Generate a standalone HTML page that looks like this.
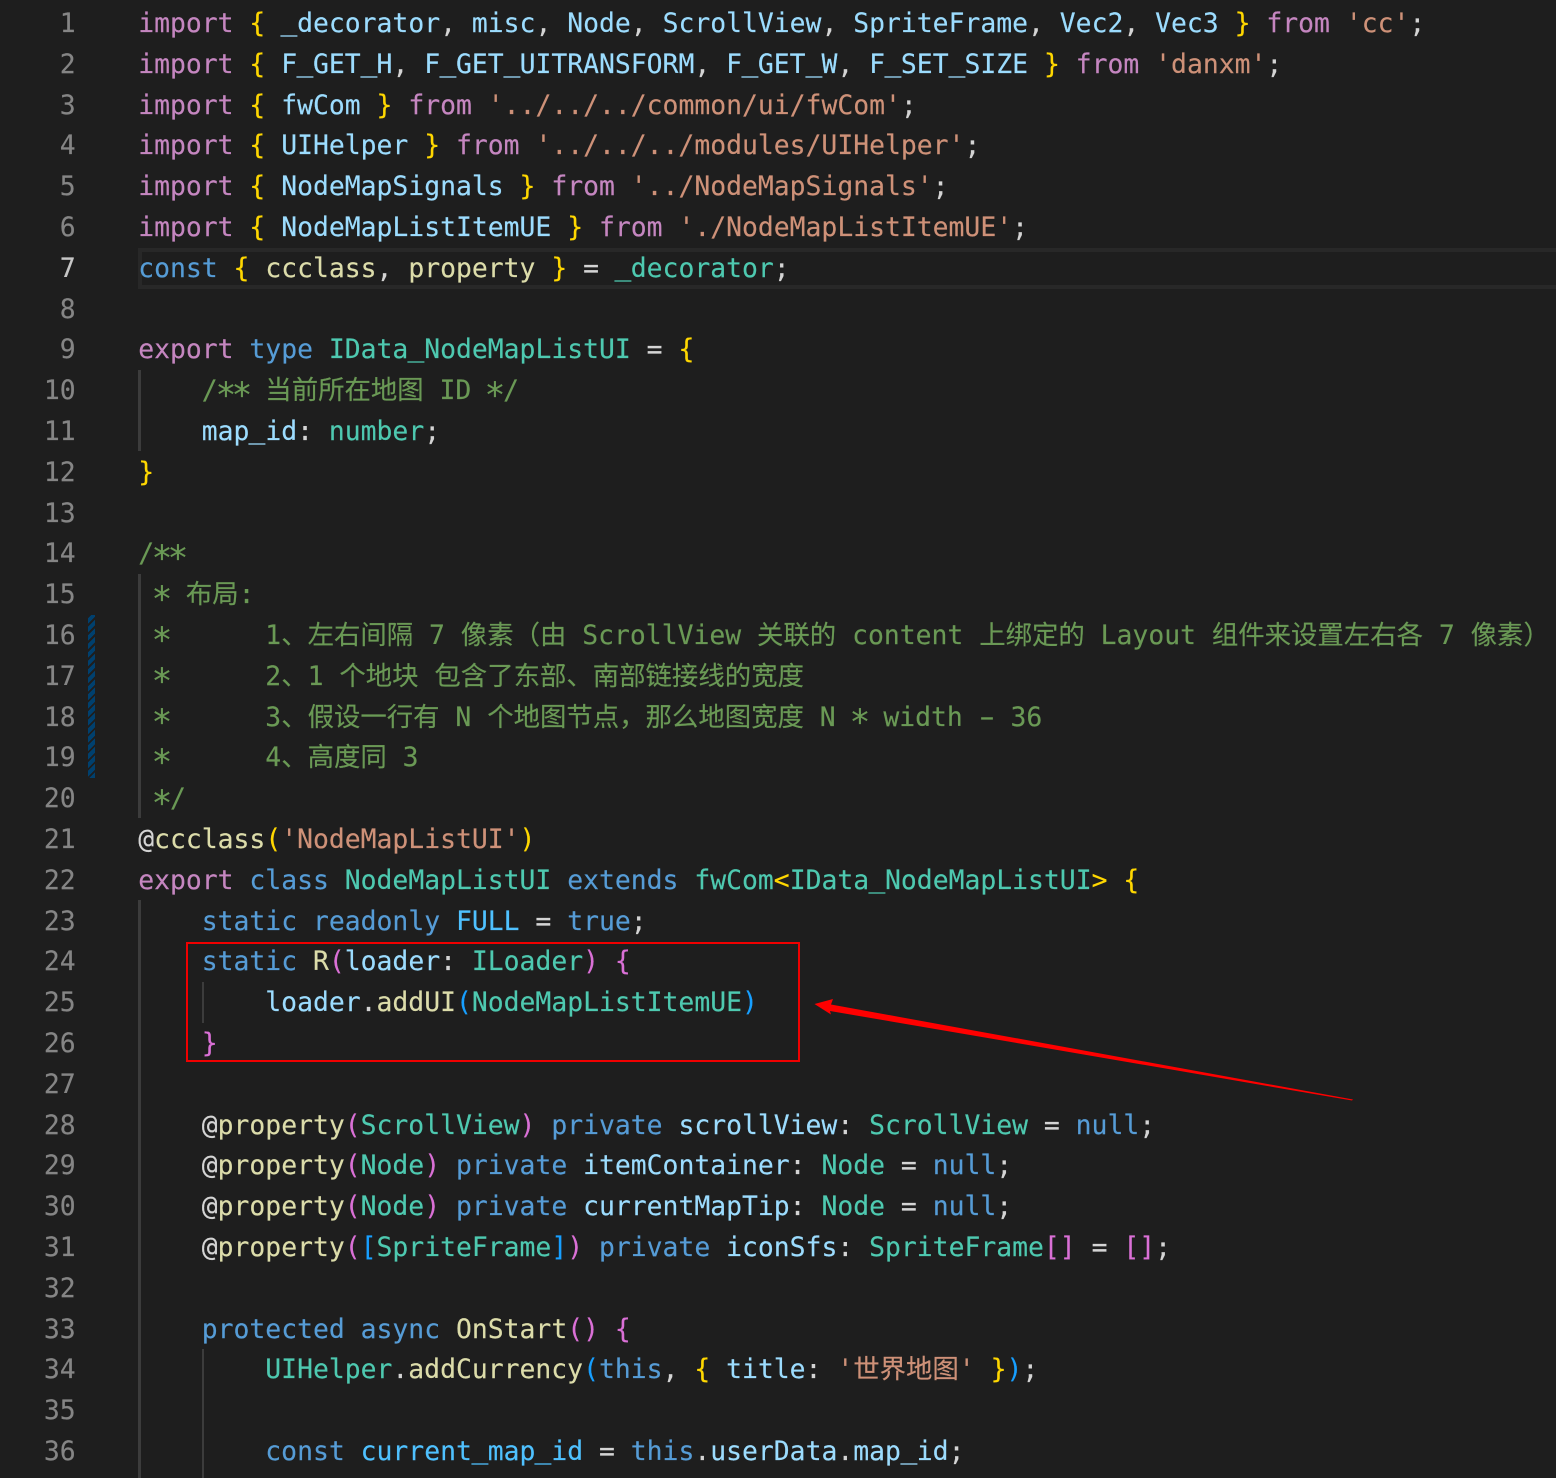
<!DOCTYPE html>
<html lang="en">
<head>
<meta charset="utf-8">
<title>NodeMapListUI.ts</title>
<style>
html,body{margin:0;padding:0;background:#1e1e1e;}
body{width:1556px;height:1478px;overflow:hidden;position:relative;font-family:"DejaVu Sans Mono","Noto Sans CJK SC",monospace;font-size:26.4px;color:#d4d4d4;-webkit-text-stroke:0.15px currentColor;}
.abs{position:absolute;}
#nums{position:absolute;left:0;top:4px;width:75.7px;text-align:right;color:#858585;}
#nums div,#code div{height:40.8px;line-height:40.8px;white-space:pre;}
#nums .on{color:#c6c6c6;}
#code{position:absolute;left:138.2px;top:4px;width:1418px;}
.k{color:#c586c0}.v{color:#9cdcfe}.y{color:#ffd700}.s{color:#ce9178}.b{color:#569cd6}.f{color:#dcdcaa}.t{color:#4ec9b0}.c{color:#6a9955}.p{color:#da70d6}.l{color:#179fff}.o{color:#4fc1ff}
.g{position:absolute;background:#3c3c3c;width:3px;}
.a{display:inline-block;transform:translateY(5.5px) scale(1.3);}
.d{display:inline-block;transform:scaleX(1.7);}
.u{display:inline-block;transform:translateY(-2px) scaleX(1.06);}
</style>
</head>
<body>
<div class="abs" style="left:138px;top:248px;width:1418px;height:41px;box-sizing:border-box;border:4px solid #282828;border-right:0;"></div>
<div class="g" style="left:138px;top:370px;height:81px;"></div>
<div class="g" style="left:138px;top:574px;height:244px;"></div>
<div class="g" style="left:138px;top:900px;height:578px;"></div>
<div class="g" style="left:202px;top:982px;height:41px;width:2px;"></div>
<div class="g" style="left:202px;top:1349px;height:129px;width:2px;"></div>
<div class="abs" style="left:88px;top:615px;width:7px;height:163px;background:repeating-linear-gradient(-45deg,#00406e 0,#00406e 4px,#1e1e1e 4px,#1e1e1e 6px);"></div>
<div id="nums">
<div>1</div><div>2</div><div>3</div><div>4</div><div>5</div><div>6</div><div class="on">7</div><div>8</div><div>9</div><div>10</div><div>11</div><div>12</div><div>13</div><div>14</div><div>15</div><div>16</div><div>17</div><div>18</div><div>19</div><div>20</div><div>21</div><div>22</div><div>23</div><div>24</div><div>25</div><div>26</div><div>27</div><div>28</div><div>29</div><div>30</div><div>31</div><div>32</div><div>33</div><div>34</div><div>35</div><div>36</div>
</div>
<div id="code">
<div><span class="k">import</span> <span class="y">{</span> <span class="v"><span class="u">_</span>decorator</span>, <span class="v">misc</span>, <span class="v">Node</span>, <span class="v">ScrollView</span>, <span class="v">SpriteFrame</span>, <span class="v">Vec2</span>, <span class="v">Vec3</span> <span class="y">}</span> <span class="k">from</span> <span class="s">'cc'</span>;</div>
<div><span class="k">import</span> <span class="y">{</span> <span class="v">F<span class="u">_</span>GET<span class="u">_</span>H</span>, <span class="v">F<span class="u">_</span>GET<span class="u">_</span>UITRANSFORM</span>, <span class="v">F<span class="u">_</span>GET<span class="u">_</span>W</span>, <span class="v">F<span class="u">_</span>SET<span class="u">_</span>SIZE</span> <span class="y">}</span> <span class="k">from</span> <span class="s">'danxm'</span>;</div>
<div><span class="k">import</span> <span class="y">{</span> <span class="v">fwCom</span> <span class="y">}</span> <span class="k">from</span> <span class="s">'../../../common/ui/fwCom'</span>;</div>
<div><span class="k">import</span> <span class="y">{</span> <span class="v">UIHelper</span> <span class="y">}</span> <span class="k">from</span> <span class="s">'../../../modules/UIHelper'</span>;</div>
<div><span class="k">import</span> <span class="y">{</span> <span class="v">NodeMapSignals</span> <span class="y">}</span> <span class="k">from</span> <span class="s">'../NodeMapSignals'</span>;</div>
<div><span class="k">import</span> <span class="y">{</span> <span class="v">NodeMapListItemUE</span> <span class="y">}</span> <span class="k">from</span> <span class="s">'./NodeMapListItemUE'</span>;</div>
<div><span class="b">const</span> <span class="y">{</span> <span class="f">ccclass</span>, <span class="f">property</span> <span class="y">}</span> = <span class="t"><span class="u">_</span>decorator</span>;</div>
<div> </div>
<div><span class="k">export</span> <span class="b">type</span> <span class="t">IData<span class="u">_</span>NodeMapListUI</span> = <span class="y">{</span></div>
<div><span class="c">    /<span class="a">*</span><span class="a">*</span> 当前所在地图 ID <span class="a">*</span>/</span></div>
<div>    <span class="v">map<span class="u">_</span>id</span>: <span class="t">number</span>;</div>
<div><span class="y">}</span></div>
<div> </div>
<div><span class="c">/<span class="a">*</span><span class="a">*</span></span></div>
<div><span class="c"> <span class="a">*</span> 布局:</span></div>
<div><span class="c"> <span class="a">*</span>      1、左右间隔 7 像素（由 ScrollView 关联的 content 上绑定的 Layout 组件来设置左右各 7 像素）</span></div>
<div><span class="c"> <span class="a">*</span>      2、1 个地块 包含了东部、南部链接线的宽度</span></div>
<div><span class="c"> <span class="a">*</span>      3、假设一行有 N 个地图节点，那么地图宽度 N <span class="a">*</span> width <span class="d">-</span> 36</span></div>
<div><span class="c"> <span class="a">*</span>      4、高度同 3</span></div>
<div><span class="c"> <span class="a">*</span>/</span></div>
<div>@<span class="f">ccclass</span><span class="y">(</span><span class="s">'NodeMapListUI'</span><span class="y">)</span></div>
<div><span class="k">export</span> <span class="b">class</span> <span class="t">NodeMapListUI</span> <span class="b">extends</span> <span class="t">fwCom</span><span class="y">&lt;</span><span class="t">IData<span class="u">_</span>NodeMapListUI</span><span class="y">&gt;</span> <span class="y">{</span></div>
<div>    <span class="b">static</span> <span class="b">readonly</span> <span class="o">FULL</span> = <span class="b">true</span>;</div>
<div>    <span class="b">static</span> <span class="f">R</span><span class="p">(</span><span class="v">loader</span>: <span class="t">ILoader</span><span class="p">)</span> <span class="p">{</span></div>
<div>        <span class="v">loader</span>.<span class="f">addUI</span><span class="l">(</span><span class="t">NodeMapListItemUE</span><span class="l">)</span></div>
<div>    <span class="p">}</span></div>
<div> </div>
<div>    @<span class="f">property</span><span class="p">(</span><span class="t">ScrollView</span><span class="p">)</span> <span class="b">private</span> <span class="v">scrollView</span>: <span class="t">ScrollView</span> = <span class="b">null</span>;</div>
<div>    @<span class="f">property</span><span class="p">(</span><span class="t">Node</span><span class="p">)</span> <span class="b">private</span> <span class="v">itemContainer</span>: <span class="t">Node</span> = <span class="b">null</span>;</div>
<div>    @<span class="f">property</span><span class="p">(</span><span class="t">Node</span><span class="p">)</span> <span class="b">private</span> <span class="v">currentMapTip</span>: <span class="t">Node</span> = <span class="b">null</span>;</div>
<div>    @<span class="f">property</span><span class="p">(</span><span class="l">[</span><span class="t">SpriteFrame</span><span class="l">]</span><span class="p">)</span> <span class="b">private</span> <span class="v">iconSfs</span>: <span class="t">SpriteFrame</span><span class="p">[]</span> = <span class="p">[]</span>;</div>
<div> </div>
<div>    <span class="b">protected</span> <span class="b">async</span> <span class="f">OnStart</span><span class="p">()</span> <span class="p">{</span></div>
<div>        <span class="t">UIHelper</span>.<span class="f">addCurrency</span><span class="l">(</span><span class="b">this</span>, <span class="y">{</span> <span class="v">title</span>: <span class="s">'世界地图'</span> <span class="y">}</span><span class="l">)</span>;</div>
<div> </div>
<div>        <span class="b">const</span> <span class="o">current<span class="u">_</span>map<span class="u">_</span>id</span> = <span class="b">this</span>.<span class="v">userData</span>.<span class="v">map<span class="u">_</span>id</span>;</div>
</div>
<div class="abs" style="left:186px;top:942px;width:614px;height:120px;box-sizing:border-box;border:2px solid #f00000;"></div>
<svg class="abs" style="left:0;top:0;" width="1556" height="1478" viewBox="0 0 1556 1478">
<polygon fill="#ff0000" points="814.5,1004 833,999 831,1004.5 1353,1099.5 1352,1100.5 830,1011 831,1014.5"/>
</svg>
</body>
</html>
